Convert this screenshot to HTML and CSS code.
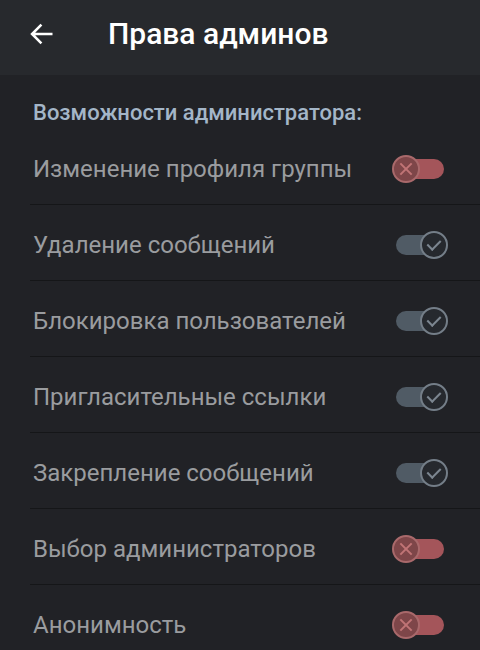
FILE: index.html
```html
<!DOCTYPE html>
<html lang="ru">
<head>
  <meta charset="UTF-8">
  <meta name="viewport" content="width=device-width, initial-scale=1.0">
  <title>Права админов</title>
  <link rel="stylesheet" href="styles.css">
</head>
<body>
  <header class="topbar">
    <button class="back" type="button" aria-label="Назад">
      <svg width="28" height="28" viewBox="0 0 24 24"><path d="M21 12H3.5M11.5 4l-8 8 8 8" fill="none" stroke="#fff" stroke-width="2.2"/></svg>
    </button>
    <h1 class="title">Права админов</h1>
  </header>

  <main class="content">
    <h2 class="section-title">Возможности администратора:</h2>

    <div class="row">
      <span class="label">Изменение профиля группы</span>
      <span class="switch off"><span class="knob"></span></span>
    </div>
    <div class="row">
      <span class="label">Удаление сообщений</span>
      <span class="switch on"><span class="knob"></span></span>
    </div>
    <div class="row">
      <span class="label">Блокировка пользователей</span>
      <span class="switch on"><span class="knob"></span></span>
    </div>
    <div class="row">
      <span class="label">Пригласительные ссылки</span>
      <span class="switch on"><span class="knob"></span></span>
    </div>
    <div class="row">
      <span class="label">Закрепление сообщений</span>
      <span class="switch on"><span class="knob"></span></span>
    </div>
    <div class="row">
      <span class="label">Выбор администраторов</span>
      <span class="switch off"><span class="knob"></span></span>
    </div>
    <div class="row">
      <span class="label">Анонимность</span>
      <span class="switch off"><span class="knob"></span></span>
    </div>
  </main>
</body>
</html>
```

FILE: styles.css
```css
* {
  box-sizing: border-box;
}
body {
  margin: 0;
  background-color: #212226;
  font-family: Roboto, "Noto Sans", sans-serif;
  overflow: hidden;
}
.topbar {
  height: 75px;
  background-color: #27292d;
  display: flex;
  align-items: center;
  padding-left: 28px;
}
.back {
  background: none;
  border: 0;
  padding: 0;
  width: 28px;
  height: 28px;
  display: flex;
  margin-top: -8px;
}
.title {
  margin: -8px 0 0 52px;
  color: #ffffff;
  font-size: 30px;
  font-weight: 500;
}
.content {
  padding-left: 30px;
}
.section-title {
  margin: 0;
  padding: 23px 0 3px 3px;
  line-height: 30px;
  font-size: 22px;
  font-weight: 500;
  color: #a4b6c8;
}
.row {
  height: 76px;
  border-bottom: 1px solid #151618;
  display: flex;
  align-items: center;
  justify-content: space-between;
  padding: 4px 36px 0 3px;
}
.row:first-of-type {
  height: 74px;
  padding-top: 3px;
}
.label {
  color: #9a9c9f;
  font-size: 24px;
}
.switch {
  position: relative;
  width: 48px;
  height: 20px;
  border-radius: 10px;
}
.switch.off {
  background-color: #a4555a;
}
.switch.on {
  background-color: #505b65;
  width: 46px;
  margin-right: 2px;
}
.knob {
  position: absolute;
  top: -4px;
  width: 28px;
  height: 28px;
  border-radius: 50%;
}
.switch.off .knob {
  left: -4px;
  background-color: #7e4649;
  border: 2px solid #a9696b;
}
.switch.on .knob {
  right: -6px;
  background-color: #26292e;
  border: 2px solid #747e88;
}
.knob::before,
.knob::after {
  content: "";
  position: absolute;
}
.switch.off .knob::before,
.switch.off .knob::after {
  left: 4px;
  top: 11px;
  width: 16px;
  height: 2px;
  background-color: #c07476;
  transform: rotate(45deg);
}
.switch.off .knob::after {
  transform: rotate(-45deg);
}
.switch.on .knob::before {
  left: 8px;
  top: 4px;
  width: 6px;
  height: 11px;
  border-right: 2px solid #7c8690;
  border-bottom: 2px solid #7c8690;
  transform: rotate(45deg);
}
```
